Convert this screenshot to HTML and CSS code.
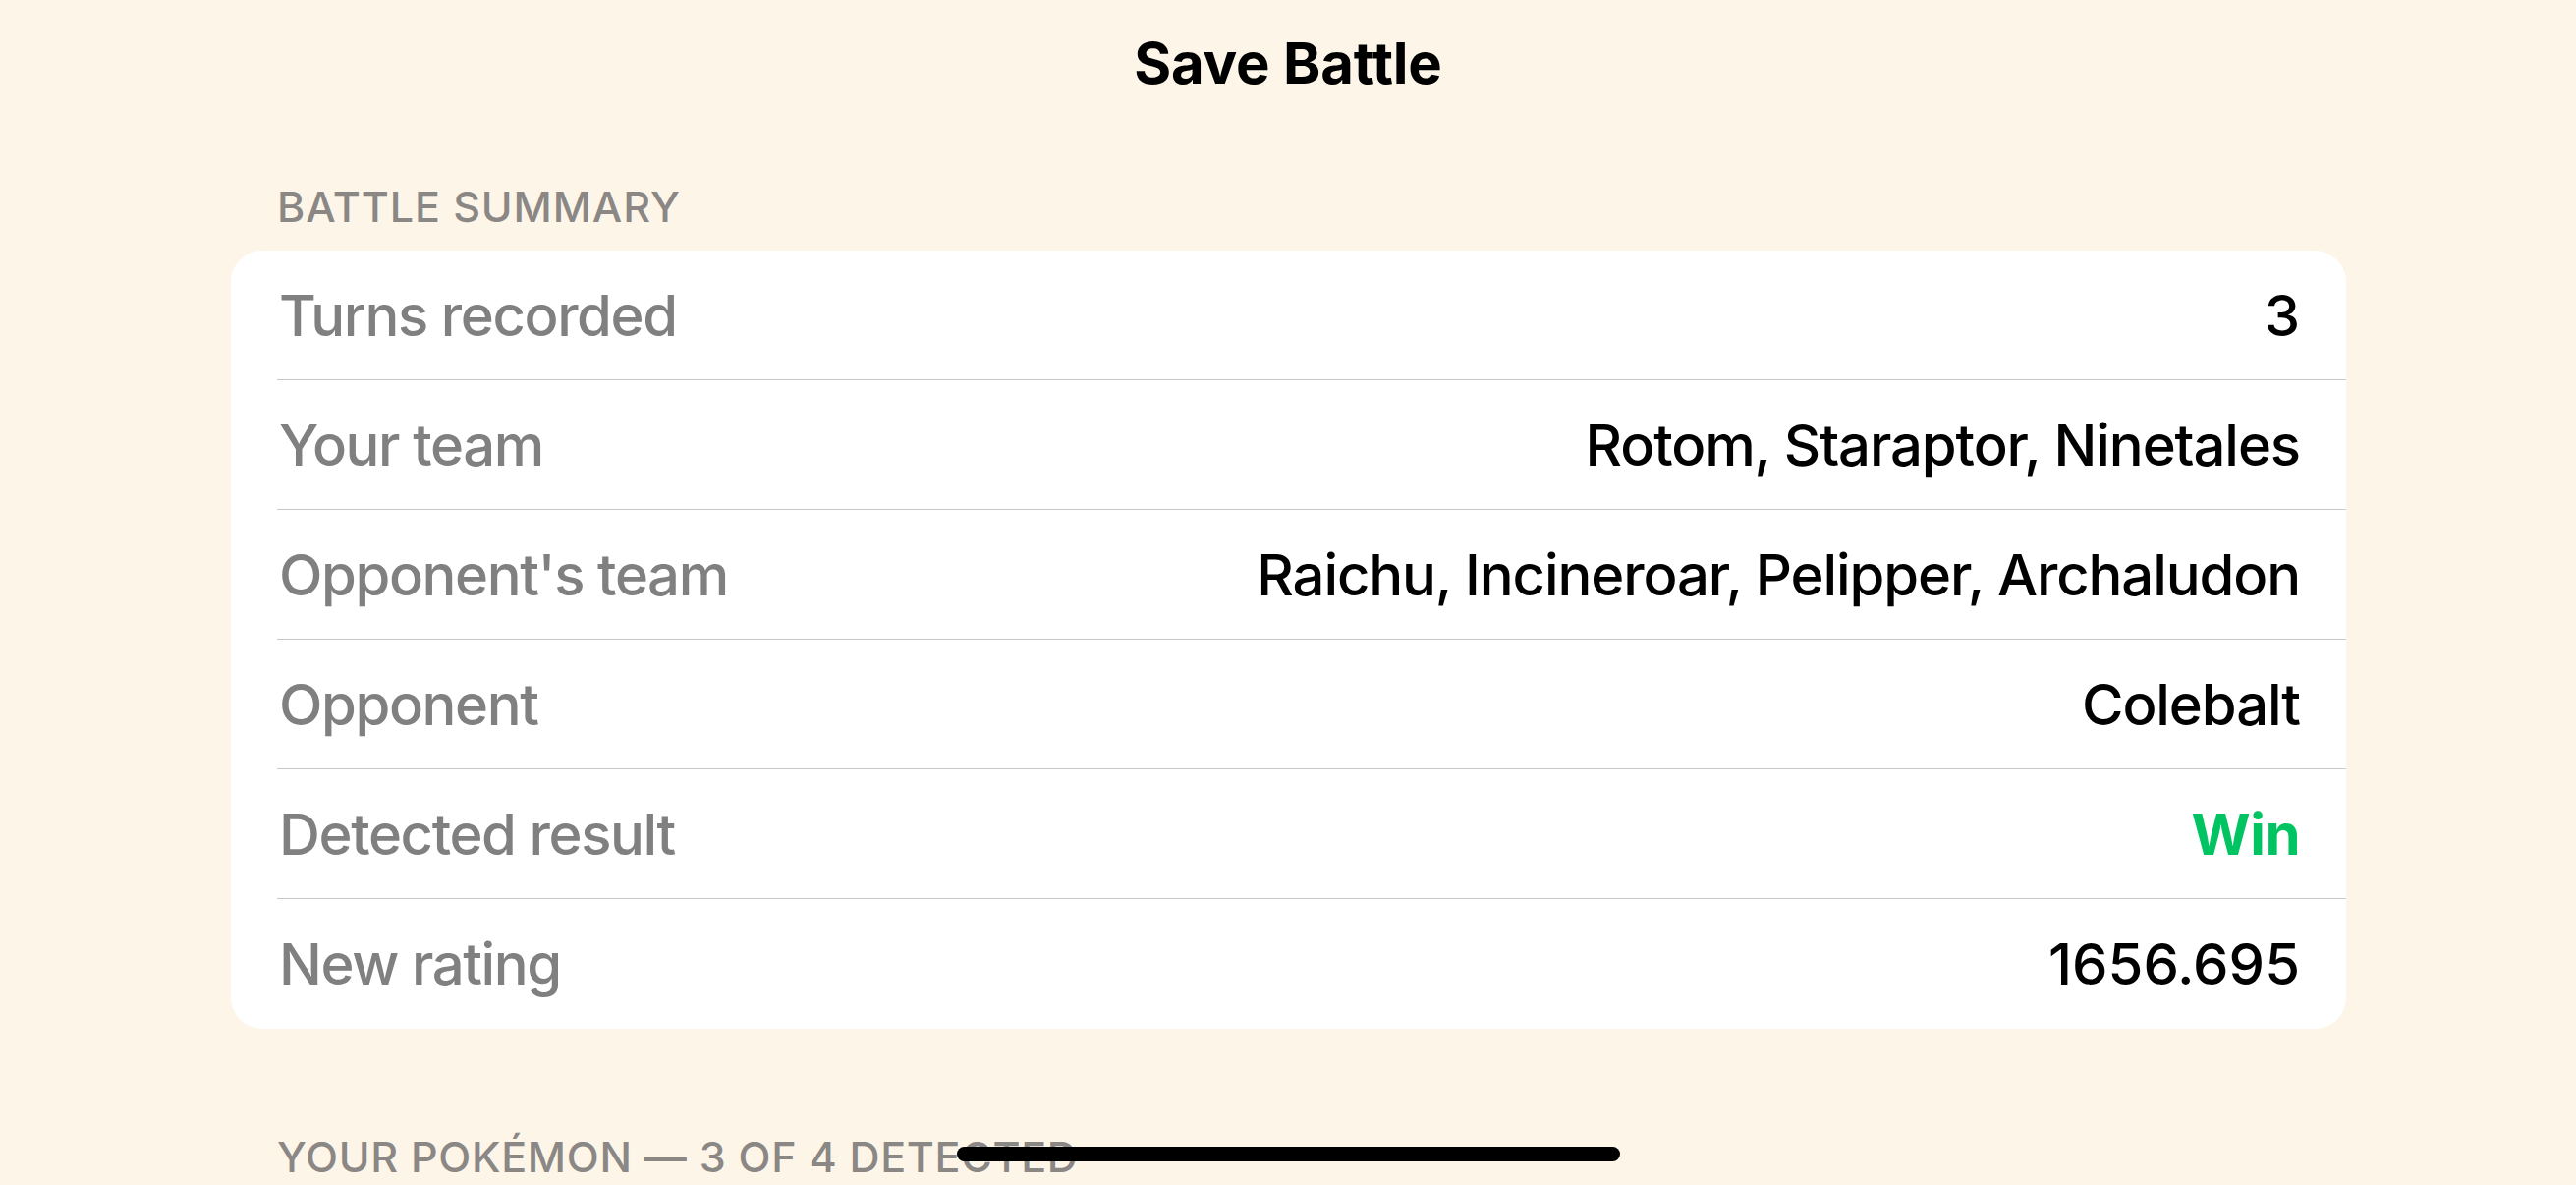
FILE: index.html
```html
<!DOCTYPE html>
<html lang="en">
<head>
<meta charset="utf-8">
<title>Save Battle</title>
<link rel="stylesheet" href="styles.css">
</head>
<body>
<div class="screen">
  <header class="nav">
    <h1 class="nav-title">Save Battle</h1>
  </header>
  <main class="content">
    <h2 class="section-header">BATTLE SUMMARY</h2>
    <section class="card">
      <div class="row"><span class="label">Turns recorded</span><span class="value value-num">3</span></div>
      <div class="row"><span class="label">Your team</span><span class="value">Rotom, Staraptor, Ninetales</span></div>
      <div class="row"><span class="label">Opponent's team</span><span class="value">Raichu, Incineroar, Pelipper, Archaludon</span></div>
      <div class="row"><span class="label">Opponent</span><span class="value">Colebalt</span></div>
      <div class="row"><span class="label">Detected result</span><span class="value value-win">Win</span></div>
      <div class="row"><span class="label">New rating</span><span class="value value-num">1656.695</span></div>
    </section>
    <h2 class="section-header section-header-second">YOUR POKÉMON — 3 OF 4 DETECTED</h2>
  </main>
  <div class="home-indicator"></div>
</div>
</body>
</html>
```
FILE: styles.css
```css
html, body {
  margin: 0;
  padding: 0;
}
body {
  background: #fdf5e8;
  font-family: Inter, "Noto Sans", "Liberation Sans", sans-serif;
  color: #000;
  overflow: hidden;
}
.screen {
  position: relative;
  width: 2622px;
  height: 1206px;
  overflow: hidden;
}
.nav {
  height: 128px;
  display: flex;
  align-items: center;
  justify-content: center;
}
.nav-title {
  margin: 0;
  font-size: 58px;
  line-height: 128px;
  font-weight: 700;
  letter-spacing: -0.2px;
}
.content {
  padding: 0 234px 0 235px;
}
.section-header {
  margin: 52px 0 15px 0;
  padding-left: 47px;
  font-size: 43px;
  line-height: 60px;
  font-weight: 500;
  color: #8a8785;
  letter-spacing: 0.9px;
}
.section-header-second {
  margin-top: 100px;
  letter-spacing: 0.7px;
}
.card {
  background: #ffffff;
  border-radius: 32px;
  overflow: hidden;
}
.row {
  height: 131px;
  margin-left: 47px;
  padding-right: 47px;
  display: flex;
  align-items: center;
  justify-content: space-between;
  border-bottom: 1px solid #c8c8c8;
  font-size: 58px;
  font-weight: 500;
  letter-spacing: -1.4px;
}
.row:last-child {
  height: 132px;
  border-bottom: none;
}
.label {
  color: #808080;
  padding-left: 2px;
}
.value {
  color: #000;
  text-align: right;
  letter-spacing: -1.1px;
}
.value-num {
  letter-spacing: 0;
}
.value-win {
  color: #00c462;
  font-weight: 700;
  letter-spacing: -0.5px;
}
.home-indicator {
  position: absolute;
  left: 974px;
  top: 1167px;
  width: 675px;
  height: 15px;
  border-radius: 8px;
  background: #000;
}
```
